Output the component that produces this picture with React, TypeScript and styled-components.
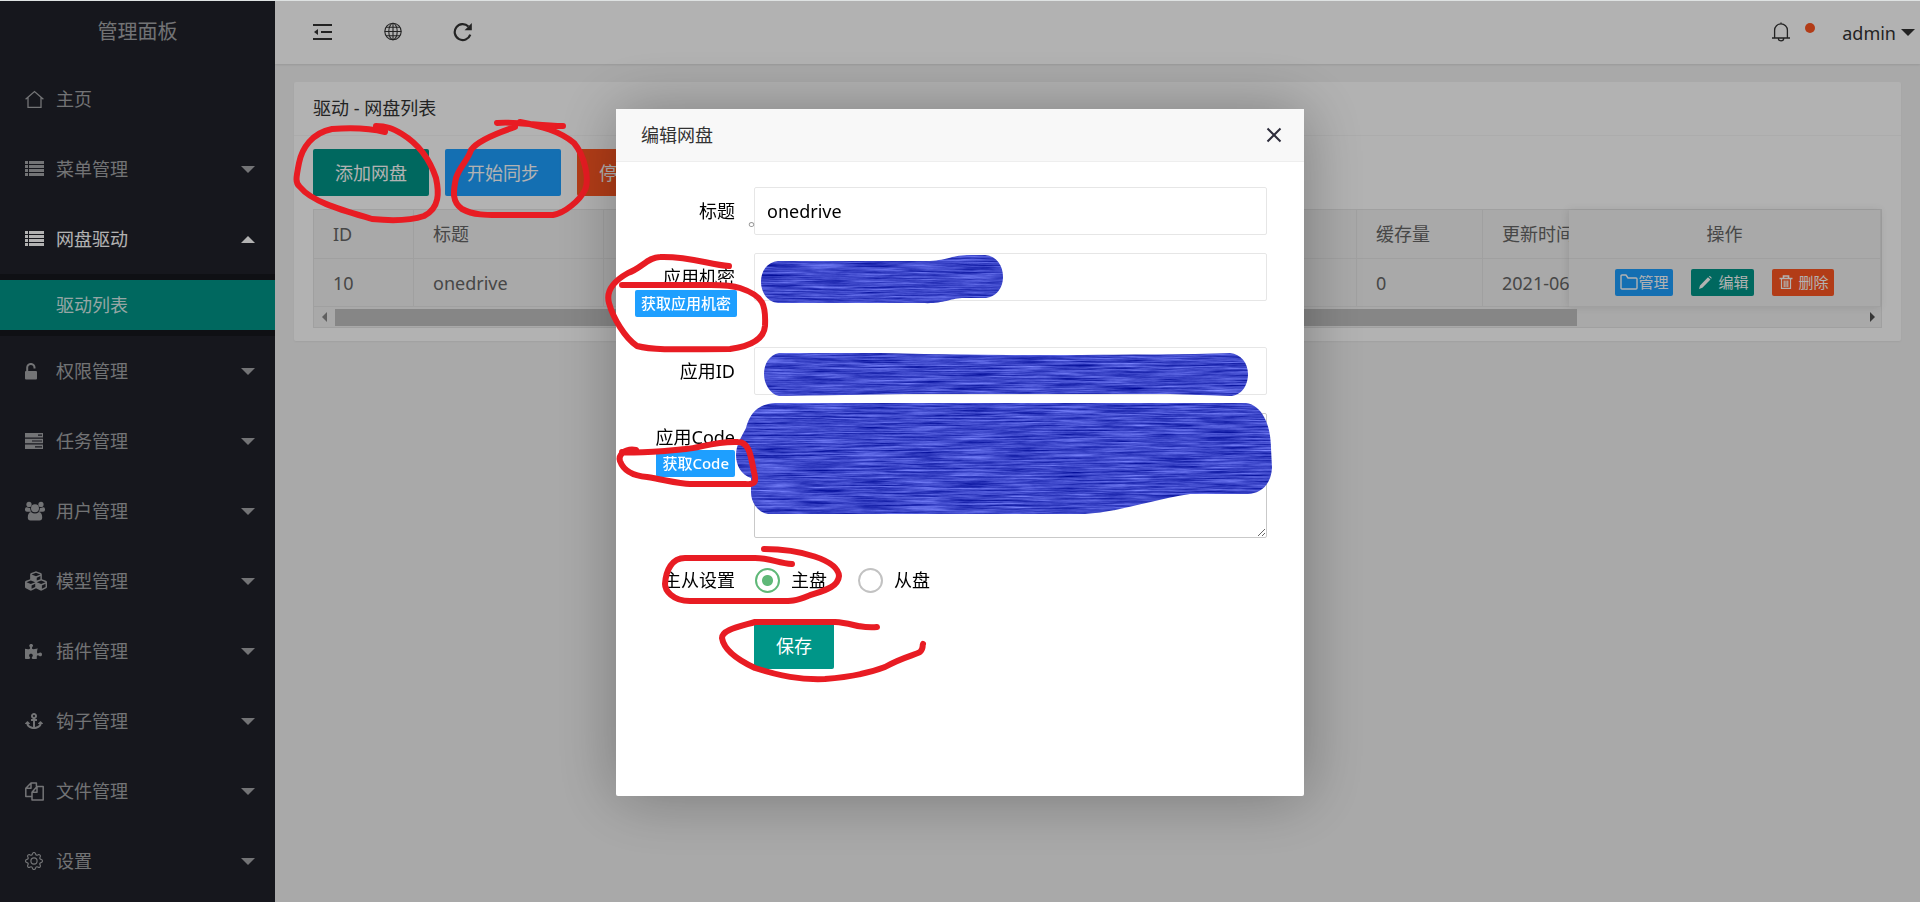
import React, { useState } from "react";
import styled, { createGlobalStyle, css } from "styled-components";
import { FaAnchor, FaCubes, FaPuzzlePiece } from "react-icons/fa";
import { BsGear } from "react-icons/bs";

const GlobalStyle = createGlobalStyle`
  *, *::before, *::after { box-sizing: border-box; }
  html, body { margin: 0; height: 100%; overflow: hidden; }
  #root { height: 100%; }
  body, button, input, textarea {
    font-family: "Noto Sans", "Noto Sans CJK SC", sans-serif;
    font-size: 18px;
    line-height: 24px;
  }
  body { background: #f2f2f2; color: #333; }
  button { cursor: pointer; border: 0; }
`;

/* ---------- page frame ---------- */

const Page = styled.div`
  display: flex;
  height: 100%;
  border-top: 1px solid #dfe3e3;
`;

const Sidebar = styled.aside`
  flex: 0 0 275px;
  background: #20222a;
  color: rgba(255, 255, 255, 0.6);
  overflow: hidden;
`;

const Logo = styled.div`
  height: 63px;
  line-height: 62px;
  font-size: 20px;
  text-align: center;
`;

const Menu = styled.ul`
  list-style: none;
  margin: 0;
  padding: 0;
`;

const MenuLink = styled.a<{ $open?: boolean }>`
  display: flex;
  align-items: center;
  height: 70px;
  padding: 0 20px 0 25px;
  color: ${(p) => (p.$open ? "#fff" : "inherit")};
  text-decoration: none;
`;

const MenuIcon = styled.span`
  flex: 0 0 31px;
  height: 22px;
  display: flex;
  align-items: center;
`;

const Caret = styled.i<{ $up?: boolean }>`
  margin-left: auto;
  border: 7px solid transparent;
  ${(p) =>
    p.$up
      ? css`border-bottom-color: currentColor; border-top-width: 0;`
      : css`border-top-color: currentColor; border-bottom-width: 0;`}
`;

const SubMenu = styled.ul`
  list-style: none;
  margin: 0;
  padding: 6px 0;
  background: #16181e;
`;

const SubLink = styled.a`
  display: block;
  padding-left: 56px;
  line-height: 50px;
  background: #009688;
  color: rgba(255, 255, 255, 0.85);
  text-decoration: none;
`;

const Main = styled.main`
  flex: 1;
  min-width: 0;
`;

const TopBar = styled.header`
  display: flex;
  align-items: center;
  height: 63px;
  padding: 0 5px 0 37px;
  background: #fff;
  box-shadow: 0 1px 2px rgba(0, 0, 0, 0.1);
`;

const ToolButton = styled.button`
  width: 22px;
  height: 22px;
  margin-right: 48px;
  padding: 0;
  background: none;
  color: #333;
`;

const Account = styled.div`
  display: flex;
  align-items: center;
  margin-left: auto;
`;

const BellButton = styled(ToolButton)`
  margin-right: 13px;
`;

const Dot = styled.span`
  width: 10px;
  height: 10px;
  margin: 0 27px 10px 0;
  border-radius: 50%;
  background: #ff5722;
`;

const UserLink = styled.a`
  display: flex;
  align-items: center;
  gap: 5px;
  color: #333;
  text-decoration: none;
`;

/* ---------- drive list card ---------- */

const Card = styled.section`
  margin: 18px 19px;
  border-radius: 2px;
  background: #fff;
  box-shadow: 0 1px 2px rgba(0, 0, 0, 0.05);
`;

const CardTitle = styled.h1`
  margin: 0;
  padding: 0 19px;
  border-bottom: 1px solid #f6f6f6;
  font-size: 18px;
  font-weight: 400;
  line-height: 53px;
`;

const CardBody = styled.div`
  padding: 13px 19px;
`;

const Actions = styled.div`
  display: flex;
  gap: 16px;
  margin-bottom: 13px;
`;

const Button = styled.button<{ $bg: string }>`
  height: 47px;
  padding: 0 22px;
  border-radius: 2px;
  background: ${(p) => p.$bg};
  color: #fff;
  white-space: nowrap;
`;

const Grid = styled.div`
  border: 1px solid #e6e6e6;
  background: #f2f2f2;
  color: #666;
`;

const Panes = styled.div`
  display: flex;
`;

const ScrollPane = styled.div`
  flex: 1;
  min-width: 0;
  overflow: hidden;
`;

const FixedPane = styled.div`
  flex: 0 0 312px;
  box-shadow: -1px 0 8px rgba(0, 0, 0, 0.1);
`;

const Table = styled.table<{ $center?: boolean }>`
  width: ${(p) => (p.$center ? "100%" : "1369px")};
  table-layout: fixed;
  border-collapse: separate;
  border-spacing: 0;
  text-align: ${(p) => (p.$center ? "center" : "left")};
  th, td {
    height: 48px;
    padding: 0 19px;
    border-bottom: 1px solid #e6e6e6;
    border-right: 1px solid #e6e6e6;
    font-weight: 400;
    line-height: 22px;
    text-align: inherit;
    white-space: nowrap;
  }
  th { height: 49px; }
`;

const RowActions = styled.div`
  display: flex;
  justify-content: center;
  gap: 18px;
`;

const MiniButton = styled.button<{ $bg: string; $tight?: boolean }>`
  display: flex;
  align-items: center;
  gap: ${(p) => (p.$tight ? 0 : 4)}px;
  height: 27px;
  padding: 0 5px;
  border-radius: 2px;
  background: ${(p) => p.$bg};
  color: #fff;
  font-size: 15px;
  line-height: 27px;
`;

const ScrollBar = styled.div`
  display: flex;
  align-items: center;
  height: 20px;
  padding: 0 6px 0 8px;
`;

const Thumb = styled.div`
  flex: 0 0 80%;
  height: 17px;
  margin: 0 auto 0 8px;
  background: #c1c1c1;
`;

const ScrollArrow = styled.i<{ $right?: boolean }>`
  border: 5px solid transparent;
  ${(p) =>
    p.$right
      ? css`border-left-color: #505050; border-right-width: 0;`
      : css`border-right-color: #8a8a8a; border-left-width: 0;`}
`;

/* ---------- dialog ---------- */

const Shade = styled.div`
  position: fixed;
  inset: 1px 0 0;
  display: flex;
  align-items: center;
  justify-content: center;
  padding-top: 2px;
  background: rgba(0, 0, 0, 0.3);
`;

const Dialog = styled.div`
  position: relative;
  width: 688px;
  max-width: 100%;
  min-height: 687px;
  border-radius: 2px;
  background: #fff;
  box-shadow: 1px 1px 62px rgba(0, 0, 0, 0.3);
  color: #000;
`;

const DialogHead = styled.div`
  display: flex;
  align-items: center;
  justify-content: space-between;
  height: 53px;
  padding: 0 22px 0 25px;
  border-bottom: 1px solid #eee;
  background: #f8f8f8;
  color: #333;
`;

const DialogTitle = styled.h2`
  margin: 0;
  font-size: 18px;
  font-weight: 400;
`;

const CloseButton = styled.button`
  display: flex;
  padding: 0;
  background: none;
  color: #2e2d3c;
`;

const Form = styled.form`
  display: flex;
  flex-direction: column;
  gap: 18px;
  padding: 25px 37px 0 0;
`;

const FormRow = styled.div`
  position: relative;
  display: grid;
  grid-template-columns: 138px 1fr;
  align-items: start;
`;

const LabelCell = styled.div`
  padding: 12px 19px;
  text-align: right;
  white-space: nowrap;
`;

const LabelText = styled.label`
  display: block;
`;

const TagButton = styled.button`
  height: 27px;
  margin-top: 1px;
  padding: 0 6px;
  border-radius: 2px;
  background: #1e9fff;
  color: #fff;
  font-size: 15px;
  font-weight: 500;
  line-height: 27px;
  vertical-align: top;
`;

const fieldStyle = css`
  display: block;
  width: 100%;
  border: 1px solid #e6e6e6;
  border-radius: 2px;
  background: #fff;
  color: #000;
  outline: none;
`;

const TextInput = styled.input`
  ${fieldStyle}
  height: 48px;
  padding: 0 12px;
`;

const TextArea = styled.textarea`
  ${fieldStyle}
  height: 125px;
  padding: 8px 12px;
  border-color: #c9c9c9;
  resize: vertical;
`;

const Stop = styled.span`
  position: absolute;
  left: 132px;
  top: 20px;
  color: #999;
`;

const RadioGroup = styled.div`
  display: flex;
  gap: 30px;
  height: 48px;
`;

const RadioLabel = styled.label`
  display: flex;
  align-items: center;
  gap: 11px;
  padding-left: 1px;
`;

const Radio = styled.input`
  appearance: none;
  width: 25px;
  height: 25px;
  margin: 0;
  border: 2px solid #c2c2c2;
  border-radius: 50%;
  &:checked {
    border-color: #5fb878;
    background: radial-gradient(circle, #5fb878 5px, transparent 6px);
  }
`;

const SaveButton = styled(Button)`
  grid-column: 2;
  justify-self: start;
`;

/* ---------- pen marks ---------- */

const PageMarks = styled.svg`
  position: fixed;
  left: 0;
  top: 0;
  pointer-events: none;
`;

const DialogMarks = styled.svg`
  position: absolute;
  left: 0;
  top: 0;
  overflow: visible;
  pointer-events: none;
`;

const pen = {
  fill: "none",
  stroke: "#e81c23",
  strokeWidth: 6,
  strokeLinecap: "round" as const,
  strokeLinejoin: "round" as const,
};

/* ---------- icons ---------- */

const HomeIcon = () => (
  <svg width="19" height="19" viewBox="0 0 19 19" fill="none" stroke="currentColor" strokeWidth="1.3">
    <path d="M.6 9.2 9.5 1.6l8.9 7.6M3 7.5v9.8h13V7.5" />
  </svg>
);

const ListIcon = () => (
  <svg width="19" height="16" viewBox="0 0 19 16" fill="currentColor">
    {[0, 4, 8, 12].map((y) => (
      <path key={y} d={`M0 ${y}h3v3H0zM4 ${y}h15v3H4z`} />
    ))}
  </svg>
);

const UnlockIcon = () => (
  <svg width="12" height="17" viewBox="0 0 12 17">
    <path d="M2.2 8V4.6a3.6 3.6 0 0 1 7.3 0V5.4" fill="none" stroke="currentColor" strokeWidth="2" />
    <rect y="8" width="12" height="8.5" rx="1" fill="currentColor" />
  </svg>
);

const TasksIcon = () => (
  <svg width="18" height="16" viewBox="0 0 18 16" fill="currentColor" fillRule="evenodd">
    <path d="M0 0h18v4.4H0zM13 1.6v1.2h4V1.6zM0 5.8h18v4.4H0zM7 7.4v1.2h10V7.4zM0 11.6h18V16H0zM10 13.2v1.2h7v-1.2z" />
  </svg>
);

const UsersIcon = () => (
  <svg width="20" height="20" viewBox="0 0 20 20" fill="currentColor">
    <circle cx="4" cy="3.400" r="2.600" />
    <circle cx="16" cy="3.400" r="2.600" />
    <path d="M5.200 7Q5 9.200 6.400 10.800H2Q0 10.800 0 9V8.200Q0 6 1.800 6.200 4 7.200 5.200 7zM14.800 7Q15 9.200 13.600 10.800H18Q20 10.800 20 9V8.200Q20 6 18.200 6.200 16 7.200 14.800 7z" />
    <circle cx="10" cy="7.200" r="4" />
    <path d="M6 10.900Q10 14 14 10.900 17.200 11.500 17.200 16.400 17.200 19.400 14.500 19.400H5.500Q2.800 19.400 2.800 16.400 2.800 11.500 6 10.900z" />
  </svg>
);

const FilesIcon = () => (
  <svg width="19" height="19" viewBox="0 0 19 19" fill="none" stroke="currentColor" strokeWidth="1.5" strokeLinejoin="round">
    <path d="M7 14.5H.8V6.2L6 1h5.4v3.4M6 1v5.2H.8M7 10.200V18h11.200V4.500H12L7 10.200h5V4.500" />
  </svg>
);

const ShrinkIcon = () => (
  <svg width="20" height="18" viewBox="0 0 20 18" fill="none" stroke="currentColor" strokeWidth="2">
    <path d="M0 2h19M8 9h11M0 16h19" />
    <path d="M5 6v6L1 9z" fill="currentColor" stroke="none" />
  </svg>
);

const GlobeIcon = () => (
  <svg width="19" height="19" viewBox="0 0 19 19" fill="none" stroke="currentColor" strokeWidth="1.1">
    <circle cx="9" cy="9.500" r="8.200" />
    <ellipse cx="9" cy="9.500" rx="4.200" ry="8.200" />
    <path d="M9 1.300v16.400M.8 9.500h16.400M2.100 5.200h13.800M2.100 13.800h13.800" />
  </svg>
);

const ReloadIcon = () => (
  <svg width="20" height="20" viewBox="0 0 20 20">
    <path d="M17.300 12.600A8 8 0 1 1 15.400 4.400" fill="none" stroke="currentColor" strokeWidth="2.200" />
    <path d="M18.800 1v7.200h-7.200z" fill="currentColor" />
  </svg>
);

const BellIcon = () => (
  <svg width="20" height="20" viewBox="0 0 20 20" fill="none" stroke="currentColor" strokeWidth="1.300">
    <path d="M1 16h18M3.600 16V8.200a6.400 6.400 0 0 1 12.800 0V16M10 .5v1.600M7.300 16.500a2.700 2.300 0 0 0 5.400 0" />
  </svg>
);

const FolderIcon = () => (
  <svg width="18" height="18" viewBox="0 0 18 18" fill="none" stroke="currentColor" strokeWidth="1.400">
    <path d="M1 14V2q0-1 1-1h4l2 3h8q1 0 1 1v9q0 1-1 1H2q-1 0-1-1z" strokeLinejoin="round" />
  </svg>
);

const PencilIcon = () => (
  <svg width="18" height="15" viewBox="0 0 18 15" fill="currentColor">
    <path d="M3 14l1-3.600L12 2.200l2.500 2.300L6.400 12.800zM12.800 1.500q.8-.8 1.700 0l.8.700q.7.800 0 1.600z" />
  </svg>
);

const TrashIcon = () => (
  <svg width="18" height="15" viewBox="0 0 18 15" fill="none" stroke="currentColor">
    <path d="M2.500 3.500h13M6.500 3V1h5v2" strokeWidth="1.600" />
    <path d="M4.500 4v9.300h9V4M7.200 5.500v6.500M9 5.500v6.500M10.800 5.500v6.500" strokeWidth="1.200" />
  </svg>
);

/* ---------- data ---------- */

type Item = { text: string; icon: React.ReactNode; leaf?: boolean; children?: string[] };

const items: Item[] = [
  { text: "主页", icon: <HomeIcon />, leaf: true },
  { text: "菜单管理", icon: <ListIcon /> },
  { text: "网盘驱动", icon: <ListIcon />, children: ["驱动列表"] },
  { text: "权限管理", icon: <UnlockIcon /> },
  { text: "任务管理", icon: <TasksIcon /> },
  { text: "用户管理", icon: <UsersIcon /> },
  { text: "模型管理", icon: <FaCubes size={22} /> },
  { text: "插件管理", icon: <FaPuzzlePiece size={17} /> },
  { text: "钩子管理", icon: <FaAnchor size={18} /> },
  { text: "文件管理", icon: <FilesIcon /> },
  { text: "设置", icon: <BsGear size={18} /> },
];

export default function App() {
  const [title, setTitle] = useState("onedrive");
  const [role, setRole] = useState("主盘");

  return (
    <>
      <GlobalStyle />
      <Page>
        <Sidebar>
          <Logo>管理面板</Logo>
          <Menu>
            {items.map((item) => (
              <li key={item.text}>
                <MenuLink href="#" $open={!!item.children}>
                  <MenuIcon>{item.icon}</MenuIcon>
                  {item.text}
                  {!item.leaf && <Caret $up={!!item.children} />}
                </MenuLink>
                {item.children && (
                  <SubMenu>
                    {item.children.map((child) => (
                      <li key={child}>
                        <SubLink href="#">{child}</SubLink>
                      </li>
                    ))}
                  </SubMenu>
                )}
              </li>
            ))}
          </Menu>
        </Sidebar>

        <Main>
          <TopBar>
            <ToolButton aria-label="侧边伸缩"><ShrinkIcon /></ToolButton>
            <ToolButton aria-label="前台"><GlobeIcon /></ToolButton>
            <ToolButton aria-label="刷新"><ReloadIcon /></ToolButton>
            <Account>
              <BellButton aria-label="消息"><BellIcon /></BellButton>
              <Dot />
              <UserLink href="#">admin<Caret /></UserLink>
            </Account>
          </TopBar>

          <Card>
            <CardTitle>驱动 - 网盘列表</CardTitle>
            <CardBody>
              <Actions>
                <Button $bg="#009688">添加网盘</Button>
                <Button $bg="#1e9fff">开始同步</Button>
                <Button $bg="#ff5722">停止同步</Button>
              </Actions>
              <Grid>
                <Panes>
                  <ScrollPane>
                    <Table>
                      <colgroup>
                        <col width={100} />
                        <col width={190} />
                        <col width={753} />
                        <col width={126} />
                        <col width={200} />
                      </colgroup>
                      <thead>
                        <tr><th>ID</th><th>标题</th><th /><th>缓存量</th><th>更新时间</th></tr>
                      </thead>
                      <tbody>
                        <tr><td>10</td><td>onedrive</td><td /><td>0</td><td>2021-06</td></tr>
                      </tbody>
                    </Table>
                  </ScrollPane>
                  <FixedPane>
                    <Table $center>
                      <thead><tr><th>操作</th></tr></thead>
                      <tbody>
                        <tr>
                          <td>
                            <RowActions>
                              <MiniButton $bg="#1e9fff" $tight><FolderIcon />管理</MiniButton>
                              <MiniButton $bg="#009688"><PencilIcon />编辑</MiniButton>
                              <MiniButton $bg="#ff5722"><TrashIcon />删除</MiniButton>
                            </RowActions>
                          </td>
                        </tr>
                      </tbody>
                    </Table>
                  </FixedPane>
                </Panes>
                <ScrollBar>
                  <ScrollArrow />
                  <Thumb />
                  <ScrollArrow $right />
                </ScrollBar>
              </Grid>
            </CardBody>
          </Card>
        </Main>
      </Page>

      <Shade>
        <PageMarks width="620" height="240" viewBox="0 0 620 240" {...pen}>
          <path d="M385 132C365 127 345 128 332 129C312 133 302 148 299 163C296 178 295 183 300 187C312 202 342 210 372 219C392 221 412 220 424 216C440 208 439 192 436 178C430 160 420 145 402 134C392 128 386 126 376 126" />
          <path d="M497 123C515 121 540 126 563 126M515 127C500 132 478 140 471 150C468 160 460 166 456 178C453 192 452 202 462 209C475 216 490 215 505 215H553C565 213 580 200 585 190C590 178 584 155 574 143C560 131 540 126 520 122" />
        </PageMarks>

        <Dialog role="dialog" aria-labelledby="dialog-title">
          <DialogHead>
            <DialogTitle id="dialog-title">编辑网盘</DialogTitle>
            <CloseButton aria-label="关闭">
              <svg width="16" height="16" viewBox="0 0 16 16" stroke="currentColor" strokeWidth="2">
                <path d="M1.500 1.500l13 13M14.500 1.500l-13 13" />
              </svg>
            </CloseButton>
          </DialogHead>

          <Form onSubmit={(e) => e.preventDefault()}>
            <FormRow>
              <LabelCell><LabelText htmlFor="title">标题</LabelText></LabelCell>
              <Stop>。</Stop>
              <TextInput id="title" value={title} onChange={(e) => setTitle(e.target.value)} />
            </FormRow>
            <FormRow>
              <LabelCell>
                <LabelText htmlFor="secret">应用机密</LabelText>
                <TagButton type="button">获取应用机密</TagButton>
              </LabelCell>
              <TextInput id="secret" />
            </FormRow>
            <FormRow>
              <LabelCell><LabelText htmlFor="appid">应用ID</LabelText></LabelCell>
              <TextInput id="appid" />
            </FormRow>
            <FormRow>
              <LabelCell>
                <LabelText htmlFor="code">应用Code</LabelText>
                <TagButton type="button">获取Code</TagButton>
              </LabelCell>
              <TextArea id="code" />
            </FormRow>
            <FormRow role="radiogroup" aria-labelledby="role-label">
              <LabelCell id="role-label">主从设置</LabelCell>
              <RadioGroup>
                {["主盘", "从盘"].map((name) => (
                  <RadioLabel key={name}>
                    <Radio type="radio" name="role" checked={role === name} onChange={() => setRole(name)} />
                    {name}
                  </RadioLabel>
                ))}
              </RadioGroup>
            </FormRow>
            <FormRow>
              <SaveButton $bg="#009688">保存</SaveButton>
            </FormRow>
          </Form>

          <DialogMarks width="688" height="687" viewBox="616 109 688 687">
            <defs>
              <filter id="marker" x="0" y="0" width="100%" height="100%" colorInterpolationFilters="sRGB">
                <feTurbulence type="fractalNoise" baseFrequency="0.02 0.6" numOctaves="5" seed="4" />
                <feColorMatrix values="0.6 0 0 0 -0.06  0.6 0 0 0 -0.02  0.5 0 0 0 0.54  0 0 0 0 1" />
                <feComposite operator="in" in2="SourceGraphic" />
              </filter>
            </defs>
            <g fill="#3f48cc" filter="url(#marker)">
              <path d="M778 261H930C948 260 952 255 970 255H985C997 256 1003 266 1003 277C1003 288 996 298 984 298H962C948 299 944 304 922 303H778C767 302 761 292 761 282C761 271 767 262 778 261Z" />
              <path d="M779 353H880C1000 356 1100 355 1195 354L1230 353C1241 354 1248 363 1248 374C1248 386 1241 396 1230 396L1170 394H905L779 396C770 394 764 384 764 374C764 364 769 355 779 353Z" />
              <path d="M775 403H1246C1262 405 1271 425 1271 448L1272 468C1271 484 1262 493 1248 494H1190C1150 500 1120 512 1085 514H768C757 512 751 502 751 492V478C741 475 736 465 736 455C736 444 742 436 746 428C750 413 758 404 775 403Z" />
            </g>
            <g {...pen}>
              <path d="M729 266C710 265 690 256 660 257C648 257 642 268 628 273C612 282 606 292 609 303C613 318 625 338 637 346C655 351 690 349 730 349C752 346 764 338 765 326C766 305 764 296 740 288C728 284 715 285 700 285H622" />
              <path d="M636 450C625 448 618 455 620 461C624 472 635 476 647 477C665 480 680 484 690 484H745C757 485 756 480 754 472C751 458 750 442 738 442C715 441 700 448 686 449C665 451 640 454 622 452" />
              <path d="M764 549C800 549 838 560 839 576C838 588 822 591 808 596C794 602 790 601 770 601H690C672 601 665 590 665 584C666 570 672 558 685 558H755C770 558 778 563 792 564" />
              <path d="M877 627C860 629 853 623 835 622H755C738 627 722 630 722 638C724 651 740 661 755 668C780 676 800 680 825 679C850 677 872 672 885 667C903 657 915 655 920 652C924 648 922 646 923 644" />
            </g>
          </DialogMarks>
        </Dialog>
      </Shade>
    </>
  );
}
